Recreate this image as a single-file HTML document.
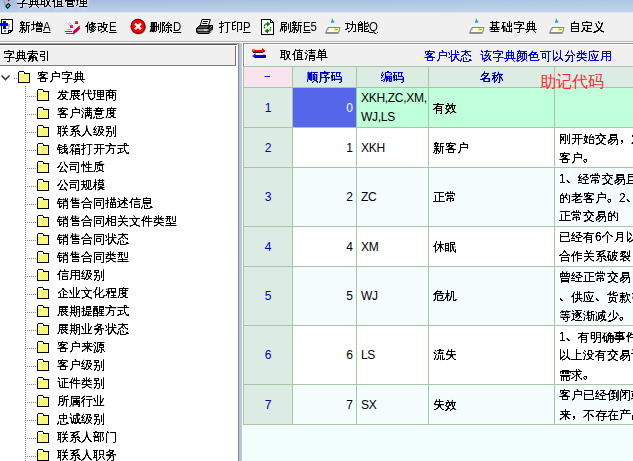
<!DOCTYPE html>
<html lang="zh-CN">
<head>
<meta charset="utf-8">
<title>字典取值管理</title>
<style>
html,body{margin:0;padding:0;}
body{width:633px;height:461px;overflow:hidden;position:relative;background:#f0f0f0;
 font-family:"Liberation Sans","WenQuanYi Zen Hei Sharp","WenQuanYi Zen Hei","Noto Sans CJK SC",sans-serif;font-size:12px;color:#000;}
.abs{position:absolute;}
svg{position:absolute;overflow:visible;}
#title{left:0;top:0;width:633px;height:12px;border-bottom:1px solid #dbe4ef;background:linear-gradient(rgba(255,255,255,0),rgba(255,255,255,0.28)),linear-gradient(90deg,#a4bbdf,#a8bfe0 30%,#a9c4e2 70%,#abc6e3);overflow:hidden;}
#title .t{position:absolute;left:16px;top:-5px;font-size:12px;line-height:14px;white-space:nowrap;color:#000;}
#title .g{color:transparent;text-shadow:0 0 3px #fff,0 0 3px #fff,0 0 4px #fff;}
.tb{position:absolute;top:20px;height:14px;line-height:14px;white-space:nowrap;font-size:12px;}
.tb u{text-decoration:underline;}
.tb .l{display:inline-block;transform:scaleX(0.95);transform-origin:0 0;}
#sep1{left:0;top:41px;width:633px;height:1px;background:#b4b4b4;}
#sep2{left:0;top:42px;width:633px;height:1px;background:#ffffff;}
#lwrap{left:0;top:43px;width:238px;height:418px;background:#fff;}
#lt1{left:0;top:43px;width:238px;height:1px;background:#a0a0a0;}
#lt2{left:0;top:44px;width:237px;height:1px;background:#555;}
#lhead{left:0;top:46px;width:235px;height:19px;background:#f0f0f0;border-right:1px solid #707070;border-bottom:1px solid #808080;box-shadow:0 1px 0 #ececec;}
#lhead span{position:absolute;left:3px;top:3px;line-height:14px;}
#tree{left:0;top:66px;width:238px;height:395px;background:#fff;overflow:hidden;}
.lbl{position:absolute;line-height:14px;white-space:nowrap;}
.dh{position:absolute;height:1px;background-image:linear-gradient(90deg,#808080 50%,transparent 50%);background-size:2px 1px;}
.dv{position:absolute;width:1px;background-image:linear-gradient(#808080 50%,transparent 50%);background-size:1px 2px;}
#split0{left:238px;top:43px;width:1px;height:418px;background:#8c8c8c;}
#split{left:239px;top:43px;width:3px;height:418px;background:linear-gradient(90deg,#b0c0d8,#bccbdf);}
#split2{left:242px;top:43px;width:1px;height:418px;background:#fff;}
#rhead{left:243px;top:43px;width:390px;height:23px;background:#f0f0f0;border-left:1px solid #8c8c8c;border-top:1px solid #8c8c8c;box-sizing:border-box;box-shadow:inset 1px 1px 0 #fff;}
#rhead span{position:absolute;line-height:14px;white-space:nowrap;}
#grid{left:243px;top:66px;width:390px;height:395px;background:#f3ffff;overflow:hidden;}
.c{position:absolute;box-sizing:border-box;border-right:1px solid #a4c9a2;border-bottom:1px solid #a4c9a2;overflow:hidden;white-space:nowrap;}
.c span{position:absolute;line-height:14px;white-space:nowrap;}
.k{filter:url(#bw);}
.n{color:#000038;font-style:normal;}
.p{font-style:normal;font-family:"Noto Sans CJK SC",sans-serif;-webkit-text-stroke:0;}
</style>
</head>
<body>
<svg width="0" height="0" style="left:0;top:0"><defs><pattern id="dith" width="2" height="2" patternUnits="userSpaceOnUse"><rect width="2" height="2" fill="#ffff00"/><rect x="0" y="0" width="1" height="1" fill="#fff"/><rect x="1" y="1" width="1" height="1" fill="#fff"/></pattern><filter id="bw" x="0" y="0" width="100%" height="100%" color-interpolation-filters="sRGB"><feComponentTransfer><feFuncA type="linear" slope="3.4" intercept="-0.62"/></feComponentTransfer></filter></defs></svg>
<div id="title" class="abs"><svg style="left:0;top:0" width="14" height="12" viewBox="0 0 14 12"><path d="M4.5 0V4.5H6.5" fill="none" stroke="#9a9a9a" stroke-width="1"/><path d="M7.6 0H9.6L8.6 1.6Z" fill="#400000"/><rect x="8" y="0" width="1" height="1" fill="#c00000"/><path d="M5 5.9L8.3 3L11 5.6L7.5 9Z" fill="#000"/><path d="M6.4 5.9L8.3 4.3L9.6 5.6L7.6 7.5Z" fill="#00d8d8"/></svg><span class="t g">字典取值管理</span><span class="t k">字典取值管理</span></div>
<div id="sep1" class="abs"></div><div id="sep2" class="abs"></div>
<svg style="left:0px;top:19px" width="14" height="16" viewBox="0 0 14 16" shape-rendering="crispEdges"><path d="M1.5 0.5H12.5V11.5L8.5 14.5H1.5Z" fill="#fff" stroke="#000"/><path d="M8.5 14.5V11.5H12.5" fill="none" stroke="#000"/><path d="M8 5h2v3h-1v2h-3v-1h2z" fill="#b0b0b0"/><path d="M0 4h3v-2h3v2h2v3h-2v3h-3v-3h-3z" fill="#0000ff"/><rect x="4" y="11" width="2" height="2" fill="#00e000"/></svg>
<svg style="left:65px;top:20px" width="16" height="15" viewBox="0 0 16 15"><path d="M0.5 3.5L4 0.5L8 5L5 7.5Z" fill="#fff" stroke="#f4f4f4" stroke-width="0.6"/><path d="M2.5 3L6 7M4 2L7 5.5" stroke="#909090" stroke-width="0.8" fill="none"/><path d="M2 9.5H6" stroke="#a8a8a8" stroke-width="1"/><g shape-rendering="crispEdges"><rect x="5" y="5" width="3" height="3" fill="#ff00c0"/><rect x="5" y="5" width="3" height="1" fill="#707858"/><rect x="5" y="7" width="3" height="1" fill="#f00030"/><rect x="10" y="1" width="3" height="3" fill="#ff00c0"/><rect x="10" y="1" width="3" height="1" fill="#707858"/><rect x="10" y="3" width="3" height="1" fill="#f00030"/><rect x="0" y="11" width="7" height="1" fill="#ff0000"/><rect x="1" y="13" width="7" height="1" fill="#c00070"/></g><path d="M8.5 14V11L14.5 6V9Z" fill="#b00060" stroke="#ff1010" stroke-width="0.9"/><path d="M9 12.6L14 8.4M9.4 13.8L14.4 9.6" stroke="#3000d0" stroke-width="0.7" stroke-dasharray="1 1"/></svg>
<svg style="left:130px;top:18px" width="17" height="17" viewBox="0 0 17 17"><circle cx="8.7" cy="9.3" r="7.3" fill="#505050" opacity="0.6"/><circle cx="8" cy="8.4" r="7" fill="#ff0000" stroke="#8c0000" stroke-width="1.2"/><path d="M5 5.4L11 11.4M11 5.4L5 11.4" stroke="#fff" stroke-width="2.2" stroke-linecap="butt"/></svg>
<svg style="left:196px;top:19px" width="18" height="16" viewBox="0 0 18 16"><path d="M4.3 6.5L6 0.5H14.3L12.5 6.5Z" fill="#fff" stroke="#000"/><path d="M7 2.5H11.8M6.4 4.5H11.2" stroke="#000" stroke-width="1"/><path d="M0.5 9.5L3.5 6.5H16.5V10.5L13 14.5H2L0.5 13Z" fill="#000" stroke="#000"/><path d="M3.8 7.2H13L11 8.8H2.2Z" fill="#606060"/><rect x="1.3" y="9.8" width="11.4" height="2.4" fill="#909090"/><rect x="8" y="10.5" width="3.3" height="1" fill="#fff"/><path d="M2.3 13.4H12.6" stroke="#808080" stroke-width="0.9"/><path d="M13.6 9.3L16 7.2M13.8 13.2L16 10.6" stroke="#e0e0e0" stroke-width="0.8"/><path d="M13.6 11.2L16 8.8" stroke="#707070" stroke-width="0.8"/></svg>
<svg style="left:261px;top:19px" width="14" height="16" viewBox="0 0 14 16"><path d="M0.5 0.5H9.5L12.5 3.5V15.5H0.5Z" fill="#fff" stroke="#000" shape-rendering="crispEdges"/><path d="M9.5 0.5V3.5H12.5" fill="none" stroke="#000" shape-rendering="crispEdges"/><path d="M3.5 9.5V7Q3.5 5 5.5 5H6.5" fill="none" stroke="#008000" stroke-width="1.4" stroke-dasharray="1.6 0.5"/><path d="M6 2.6L9.6 5L6 7.4Z" fill="#008000"/><path d="M9.5 8V10Q9.5 12 7.5 12H6.5" fill="none" stroke="#008000" stroke-width="1.4" stroke-dasharray="1.6 0.5"/><path d="M7 9.6L3.4 12L7 14.4Z" fill="#008000"/></svg>
<svg style="left:325px;top:19px" width="16" height="16" viewBox="0 0 16 16"><path d="M7.2 -0.2L8 1.8L9.4 3.2H5.9L7 2Z" fill="#008080" stroke="#00a0a0" stroke-width="0.5"/><rect x="6.6" y="2.6" width="1.6" height="1.2" fill="#00e0e0"/><path d="M3 8.5H15L13.5 13.6H0.6Z" fill="#fff" stroke="#808080" stroke-width="1"/><path d="M0.4 14.4H13.6" stroke="#8c8c8c" stroke-width="1"/><path d="M8.5 12L10 9.8H13V12Z" fill="#ffff00"/><path d="M9.8 9.4L10.8 10.6L12.5 10.2" stroke="#606000" stroke-width="0.7" fill="none"/><path d="M3.4 9.2L2.8 11.8" stroke="#a0a0a0" stroke-width="0.8"/><path d="M14.6 8.4L14 10.5" stroke="#a0a0a0" stroke-width="0.8"/></svg>
<svg style="left:469px;top:19px" width="16" height="16" viewBox="0 0 16 16"><path d="M7.2 -0.2L8 1.8L9.4 3.2H5.9L7 2Z" fill="#008080" stroke="#00a0a0" stroke-width="0.5"/><rect x="6.6" y="2.6" width="1.6" height="1.2" fill="#00e0e0"/><path d="M3 8.5H15L13.5 13.6H0.6Z" fill="#fff" stroke="#808080" stroke-width="1"/><path d="M0.4 14.4H13.6" stroke="#8c8c8c" stroke-width="1"/><path d="M8.5 12L10 9.8H13V12Z" fill="#ffff00"/><path d="M9.8 9.4L10.8 10.6L12.5 10.2" stroke="#606000" stroke-width="0.7" fill="none"/><path d="M3.4 9.2L2.8 11.8" stroke="#a0a0a0" stroke-width="0.8"/><path d="M14.6 8.4L14 10.5" stroke="#a0a0a0" stroke-width="0.8"/></svg>
<svg style="left:549px;top:19px" width="16" height="16" viewBox="0 0 16 16"><path d="M7.2 -0.2L8 1.8L9.4 3.2H5.9L7 2Z" fill="#008080" stroke="#00a0a0" stroke-width="0.5"/><rect x="6.6" y="2.6" width="1.6" height="1.2" fill="#00e0e0"/><path d="M3 8.5H15L13.5 13.6H0.6Z" fill="#fff" stroke="#808080" stroke-width="1"/><path d="M0.4 14.4H13.6" stroke="#8c8c8c" stroke-width="1"/><path d="M8.5 12L10 9.8H13V12Z" fill="#ffff00"/><path d="M9.8 9.4L10.8 10.6L12.5 10.2" stroke="#606000" stroke-width="0.7" fill="none"/><path d="M3.4 9.2L2.8 11.8" stroke="#a0a0a0" stroke-width="0.8"/><path d="M14.6 8.4L14 10.5" stroke="#a0a0a0" stroke-width="0.8"/></svg>
<div class="tb" style="left:19px"><span class="k">新增</span><span class="l"><u>A</u></span></div>
<div class="tb" style="left:85px"><span class="k">修改</span><span class="l"><u>E</u></span></div>
<div class="tb" style="left:149px"><span class="k">删除</span><span class="l"><u>D</u></span></div>
<div class="tb" style="left:219px"><span class="k">打印</span><span class="l"><u>P</u></span></div>
<div class="tb" style="left:279px"><span class="k">刷新</span><span class="l"><u>E</u>5</span></div>
<div class="tb" style="left:345px"><span class="k">功能</span><span class="l"><u>Q</u></span></div>
<div class="tb k" style="left:489px">基础字典</div>
<div class="tb k" style="left:569px">自定义</div>
<div id="lwrap" class="abs"></div><div id="lt1" class="abs"></div><div id="lt2" class="abs"></div>
<div id="lhead" class="abs"><span class="k">字典索引</span></div>
<div id="tree" class="abs">
<svg style="left:0px;top:8px" width="11" height="8" viewBox="0 0 11 8"><path d="M1.5 1.5L5.5 5.5L9.5 1.5" fill="none" stroke="#404040" stroke-width="1.6"/></svg>
<svg style="left:18px;top:5px" width="12" height="12" viewBox="0 0 12 12" shape-rendering="crispEdges"><rect x="1" y="1" width="5" height="2" fill="#fff"/><rect x="1" y="3" width="10" height="8" fill="url(#dith)"/><path d="M1 0.5H6M0.5 1V12M6.5 1V3M6 2.5H12M11.5 3V12M0 11.5H12" fill="none" stroke="#000" stroke-width="1"/></svg>
<span class="lbl k" style="left:37px;top:4px">客户字典</span>
<div class="dh" style="left:14px;top:12px;width:3px"></div>
<div class="dv" style="left:25px;top:20px;height:400px"></div>
<div class="dh" style="left:27px;top:30px;width:9px"></div>
<svg style="left:37px;top:23px" width="12" height="12" viewBox="0 0 12 12" shape-rendering="crispEdges"><rect x="1" y="1" width="5" height="2" fill="#fff"/><rect x="1" y="3" width="10" height="8" fill="url(#dith)"/><path d="M1 0.5H6M0.5 1V12M6.5 1V3M6 2.5H12M11.5 3V12M0 11.5H12" fill="none" stroke="#000" stroke-width="1"/></svg>
<span class="lbl k" style="left:57px;top:22px">发展代理商</span>
<div class="dh" style="left:27px;top:48px;width:9px"></div>
<svg style="left:37px;top:41px" width="12" height="12" viewBox="0 0 12 12" shape-rendering="crispEdges"><rect x="1" y="1" width="5" height="2" fill="#fff"/><rect x="1" y="3" width="10" height="8" fill="url(#dith)"/><path d="M1 0.5H6M0.5 1V12M6.5 1V3M6 2.5H12M11.5 3V12M0 11.5H12" fill="none" stroke="#000" stroke-width="1"/></svg>
<span class="lbl k" style="left:57px;top:40px">客户满意度</span>
<div class="dh" style="left:27px;top:66px;width:9px"></div>
<svg style="left:37px;top:59px" width="12" height="12" viewBox="0 0 12 12" shape-rendering="crispEdges"><rect x="1" y="1" width="5" height="2" fill="#fff"/><rect x="1" y="3" width="10" height="8" fill="url(#dith)"/><path d="M1 0.5H6M0.5 1V12M6.5 1V3M6 2.5H12M11.5 3V12M0 11.5H12" fill="none" stroke="#000" stroke-width="1"/></svg>
<span class="lbl k" style="left:57px;top:58px">联系人级别</span>
<div class="dh" style="left:27px;top:84px;width:9px"></div>
<svg style="left:37px;top:77px" width="12" height="12" viewBox="0 0 12 12" shape-rendering="crispEdges"><rect x="1" y="1" width="5" height="2" fill="#fff"/><rect x="1" y="3" width="10" height="8" fill="url(#dith)"/><path d="M1 0.5H6M0.5 1V12M6.5 1V3M6 2.5H12M11.5 3V12M0 11.5H12" fill="none" stroke="#000" stroke-width="1"/></svg>
<span class="lbl k" style="left:57px;top:76px">钱箱打开方式</span>
<div class="dh" style="left:27px;top:102px;width:9px"></div>
<svg style="left:37px;top:95px" width="12" height="12" viewBox="0 0 12 12" shape-rendering="crispEdges"><rect x="1" y="1" width="5" height="2" fill="#fff"/><rect x="1" y="3" width="10" height="8" fill="url(#dith)"/><path d="M1 0.5H6M0.5 1V12M6.5 1V3M6 2.5H12M11.5 3V12M0 11.5H12" fill="none" stroke="#000" stroke-width="1"/></svg>
<span class="lbl k" style="left:57px;top:94px">公司性质</span>
<div class="dh" style="left:27px;top:120px;width:9px"></div>
<svg style="left:37px;top:113px" width="12" height="12" viewBox="0 0 12 12" shape-rendering="crispEdges"><rect x="1" y="1" width="5" height="2" fill="#fff"/><rect x="1" y="3" width="10" height="8" fill="url(#dith)"/><path d="M1 0.5H6M0.5 1V12M6.5 1V3M6 2.5H12M11.5 3V12M0 11.5H12" fill="none" stroke="#000" stroke-width="1"/></svg>
<span class="lbl k" style="left:57px;top:112px">公司规模</span>
<div class="dh" style="left:27px;top:138px;width:9px"></div>
<svg style="left:37px;top:131px" width="12" height="12" viewBox="0 0 12 12" shape-rendering="crispEdges"><rect x="1" y="1" width="5" height="2" fill="#fff"/><rect x="1" y="3" width="10" height="8" fill="url(#dith)"/><path d="M1 0.5H6M0.5 1V12M6.5 1V3M6 2.5H12M11.5 3V12M0 11.5H12" fill="none" stroke="#000" stroke-width="1"/></svg>
<span class="lbl k" style="left:57px;top:130px">销售合同描述信息</span>
<div class="dh" style="left:27px;top:156px;width:9px"></div>
<svg style="left:37px;top:149px" width="12" height="12" viewBox="0 0 12 12" shape-rendering="crispEdges"><rect x="1" y="1" width="5" height="2" fill="#fff"/><rect x="1" y="3" width="10" height="8" fill="url(#dith)"/><path d="M1 0.5H6M0.5 1V12M6.5 1V3M6 2.5H12M11.5 3V12M0 11.5H12" fill="none" stroke="#000" stroke-width="1"/></svg>
<span class="lbl k" style="left:57px;top:148px">销售合同相关文件类型</span>
<div class="dh" style="left:27px;top:174px;width:9px"></div>
<svg style="left:37px;top:167px" width="12" height="12" viewBox="0 0 12 12" shape-rendering="crispEdges"><rect x="1" y="1" width="5" height="2" fill="#fff"/><rect x="1" y="3" width="10" height="8" fill="url(#dith)"/><path d="M1 0.5H6M0.5 1V12M6.5 1V3M6 2.5H12M11.5 3V12M0 11.5H12" fill="none" stroke="#000" stroke-width="1"/></svg>
<span class="lbl k" style="left:57px;top:166px">销售合同状态</span>
<div class="dh" style="left:27px;top:192px;width:9px"></div>
<svg style="left:37px;top:185px" width="12" height="12" viewBox="0 0 12 12" shape-rendering="crispEdges"><rect x="1" y="1" width="5" height="2" fill="#fff"/><rect x="1" y="3" width="10" height="8" fill="url(#dith)"/><path d="M1 0.5H6M0.5 1V12M6.5 1V3M6 2.5H12M11.5 3V12M0 11.5H12" fill="none" stroke="#000" stroke-width="1"/></svg>
<span class="lbl k" style="left:57px;top:184px">销售合同类型</span>
<div class="dh" style="left:27px;top:210px;width:9px"></div>
<svg style="left:37px;top:203px" width="12" height="12" viewBox="0 0 12 12" shape-rendering="crispEdges"><rect x="1" y="1" width="5" height="2" fill="#fff"/><rect x="1" y="3" width="10" height="8" fill="url(#dith)"/><path d="M1 0.5H6M0.5 1V12M6.5 1V3M6 2.5H12M11.5 3V12M0 11.5H12" fill="none" stroke="#000" stroke-width="1"/></svg>
<span class="lbl k" style="left:57px;top:202px">信用级别</span>
<div class="dh" style="left:27px;top:228px;width:9px"></div>
<svg style="left:37px;top:221px" width="12" height="12" viewBox="0 0 12 12" shape-rendering="crispEdges"><rect x="1" y="1" width="5" height="2" fill="#fff"/><rect x="1" y="3" width="10" height="8" fill="url(#dith)"/><path d="M1 0.5H6M0.5 1V12M6.5 1V3M6 2.5H12M11.5 3V12M0 11.5H12" fill="none" stroke="#000" stroke-width="1"/></svg>
<span class="lbl k" style="left:57px;top:220px">企业文化程度</span>
<div class="dh" style="left:27px;top:246px;width:9px"></div>
<svg style="left:37px;top:239px" width="12" height="12" viewBox="0 0 12 12" shape-rendering="crispEdges"><rect x="1" y="1" width="5" height="2" fill="#fff"/><rect x="1" y="3" width="10" height="8" fill="url(#dith)"/><path d="M1 0.5H6M0.5 1V12M6.5 1V3M6 2.5H12M11.5 3V12M0 11.5H12" fill="none" stroke="#000" stroke-width="1"/></svg>
<span class="lbl k" style="left:57px;top:238px">展期提醒方式</span>
<div class="dh" style="left:27px;top:264px;width:9px"></div>
<svg style="left:37px;top:257px" width="12" height="12" viewBox="0 0 12 12" shape-rendering="crispEdges"><rect x="1" y="1" width="5" height="2" fill="#fff"/><rect x="1" y="3" width="10" height="8" fill="url(#dith)"/><path d="M1 0.5H6M0.5 1V12M6.5 1V3M6 2.5H12M11.5 3V12M0 11.5H12" fill="none" stroke="#000" stroke-width="1"/></svg>
<span class="lbl k" style="left:57px;top:256px">展期业务状态</span>
<div class="dh" style="left:27px;top:282px;width:9px"></div>
<svg style="left:37px;top:275px" width="12" height="12" viewBox="0 0 12 12" shape-rendering="crispEdges"><rect x="1" y="1" width="5" height="2" fill="#fff"/><rect x="1" y="3" width="10" height="8" fill="url(#dith)"/><path d="M1 0.5H6M0.5 1V12M6.5 1V3M6 2.5H12M11.5 3V12M0 11.5H12" fill="none" stroke="#000" stroke-width="1"/></svg>
<span class="lbl k" style="left:57px;top:274px">客户来源</span>
<div class="dh" style="left:27px;top:300px;width:9px"></div>
<svg style="left:37px;top:293px" width="12" height="12" viewBox="0 0 12 12" shape-rendering="crispEdges"><rect x="1" y="1" width="5" height="2" fill="#fff"/><rect x="1" y="3" width="10" height="8" fill="url(#dith)"/><path d="M1 0.5H6M0.5 1V12M6.5 1V3M6 2.5H12M11.5 3V12M0 11.5H12" fill="none" stroke="#000" stroke-width="1"/></svg>
<span class="lbl k" style="left:57px;top:292px">客户级别</span>
<div class="dh" style="left:27px;top:318px;width:9px"></div>
<svg style="left:37px;top:311px" width="12" height="12" viewBox="0 0 12 12" shape-rendering="crispEdges"><rect x="1" y="1" width="5" height="2" fill="#fff"/><rect x="1" y="3" width="10" height="8" fill="url(#dith)"/><path d="M1 0.5H6M0.5 1V12M6.5 1V3M6 2.5H12M11.5 3V12M0 11.5H12" fill="none" stroke="#000" stroke-width="1"/></svg>
<span class="lbl k" style="left:57px;top:310px">证件类别</span>
<div class="dh" style="left:27px;top:336px;width:9px"></div>
<svg style="left:37px;top:329px" width="12" height="12" viewBox="0 0 12 12" shape-rendering="crispEdges"><rect x="1" y="1" width="5" height="2" fill="#fff"/><rect x="1" y="3" width="10" height="8" fill="url(#dith)"/><path d="M1 0.5H6M0.5 1V12M6.5 1V3M6 2.5H12M11.5 3V12M0 11.5H12" fill="none" stroke="#000" stroke-width="1"/></svg>
<span class="lbl k" style="left:57px;top:328px">所属行业</span>
<div class="dh" style="left:27px;top:354px;width:9px"></div>
<svg style="left:37px;top:347px" width="12" height="12" viewBox="0 0 12 12" shape-rendering="crispEdges"><rect x="1" y="1" width="5" height="2" fill="#fff"/><rect x="1" y="3" width="10" height="8" fill="url(#dith)"/><path d="M1 0.5H6M0.5 1V12M6.5 1V3M6 2.5H12M11.5 3V12M0 11.5H12" fill="none" stroke="#000" stroke-width="1"/></svg>
<span class="lbl k" style="left:57px;top:346px">忠诚级别</span>
<div class="dh" style="left:27px;top:372px;width:9px"></div>
<svg style="left:37px;top:365px" width="12" height="12" viewBox="0 0 12 12" shape-rendering="crispEdges"><rect x="1" y="1" width="5" height="2" fill="#fff"/><rect x="1" y="3" width="10" height="8" fill="url(#dith)"/><path d="M1 0.5H6M0.5 1V12M6.5 1V3M6 2.5H12M11.5 3V12M0 11.5H12" fill="none" stroke="#000" stroke-width="1"/></svg>
<span class="lbl k" style="left:57px;top:364px">联系人部门</span>
<div class="dh" style="left:27px;top:390px;width:9px"></div>
<svg style="left:37px;top:383px" width="12" height="12" viewBox="0 0 12 12" shape-rendering="crispEdges"><rect x="1" y="1" width="5" height="2" fill="#fff"/><rect x="1" y="3" width="10" height="8" fill="url(#dith)"/><path d="M1 0.5H6M0.5 1V12M6.5 1V3M6 2.5H12M11.5 3V12M0 11.5H12" fill="none" stroke="#000" stroke-width="1"/></svg>
<span class="lbl k" style="left:57px;top:382px">联系人职务</span>
</div>
<div id="split0" class="abs"></div><div id="split" class="abs"></div><div id="split2" class="abs"></div>
<div id="rhead" class="abs"><svg style="left:8px;top:4px" width="14" height="11" viewBox="0 0 14 11"><path d="M1 4H11V5H1Z" fill="#000"/><path d="M0.5 2H11V4H0.5Z" fill="#ff0000"/><path d="M10 0L13.5 3L10 5.6Z" fill="#e00000"/><circle cx="1.6" cy="2.6" r="1.5" fill="#ff0000"/><rect x="1" y="1.4" width="1" height="1" fill="#ffe000"/><path d="M3 4.9H10V7H3Z" fill="#fff"/><path d="M3 9H12V10H3Z" fill="#000"/><path d="M2 7H12V9H2Z" fill="#0000e0"/><path d="M3.6 5.2L0 8L3.6 10.6Z" fill="#0000e0"/><circle cx="12" cy="8.2" r="1.7" fill="#0000c0"/><rect x="1.4" y="7.4" width="1" height="1" fill="#00e0ff"/><path d="M13.3 7V10" stroke="#000" stroke-width="0.9"/></svg><span class="k" style="left:36px;top:4px">取值清单</span><span class="k" style="left:180px;top:5px;color:#0000ff">客户状态</span><span class="k" style="left:236px;top:5px;color:#0000ff">该字典颜色可以分类应用</span></div>
<div id="grid" class="abs">
<div class="abs" style="left:0;top:0;width:390px;height:1px;background:#a4c9a2"></div>
<div class="abs" style="left:0;top:0;width:1px;height:359px;background:#a4c9a2"></div>
<div class="c" style="left:1px;top:1px;width:49px;height:21px;background:#f7e4ef"><span class="k" style="left:-1px;width:48px;text-align:center;top:2px;color:#0000c8">－</span></div>
<div class="c" style="left:50px;top:1px;width:64px;height:21px;background:#dcebe4"><span class="k" style="left:0;width:63px;text-align:center;top:3px;color:#0000c8">顺序码</span></div>
<div class="c" style="left:114px;top:1px;width:72px;height:21px;background:#dcebe4"><span class="k" style="left:0;width:71px;text-align:center;top:3px;color:#0000c8">编码</span></div>
<div class="c" style="left:186px;top:1px;width:126px;height:21px;background:#dcebe4"><span class="k" style="left:0;width:125px;text-align:center;top:3px;color:#0000c8">名称</span></div>
<div class="c" style="left:312px;top:1px;width:146px;height:21px;background:#dcebe4"><span class="k" style="left:0;width:145px;text-align:center;top:3px;color:#0000c8"></span></div>
<div class="c" style="left:1px;top:22px;width:49px;height:40px;background:#dcebe4"><span style="left:0;width:48px;text-align:center;top:13px;color:#0000c8">1</span></div>
<div class="c" style="left:50px;top:22px;width:64px;height:40px;background:#5566ea"><span style="right:3px;top:13px;color:#fff">0</span></div>
<div class="c" style="left:114px;top:22px;width:72px;height:40px;background:#bfffd9"><span style="left:4px;top:3px;letter-spacing:-0.3px;">XKH,ZC,XM,</span><span style="left:4px;top:22px;letter-spacing:-0.3px;">WJ,LS</span></div>
<div class="c" style="left:186px;top:22px;width:126px;height:40px;background:#bfffd9"><span class="k" style="left:4px;top:13px">有效</span></div>
<div class="c" style="left:312px;top:22px;width:146px;height:40px;background:#bfffd9"></div>
<div class="c" style="left:1px;top:62px;width:49px;height:40px;background:#dcebe4"><span style="left:0;width:48px;text-align:center;top:13px;color:#0000c8">2</span></div>
<div class="c" style="left:50px;top:62px;width:64px;height:40px;background:#ffffff"><span style="right:3px;top:13px">1</span></div>
<div class="c" style="left:114px;top:62px;width:72px;height:40px;background:#ffffff"><span style="left:4px;top:13px;letter-spacing:-0.3px;">XKH</span></div>
<div class="c" style="left:186px;top:62px;width:126px;height:40px;background:#ffffff"><span class="k" style="left:4px;top:13px">新客户</span></div>
<div class="c" style="left:312px;top:62px;width:146px;height:40px;background:#ffffff"><span class="k" style="left:4px;top:3px;">刚开始交易<em class="p">，</em>对</span><span class="k" style="left:4px;top:22px;">客户<em class="p">。</em></span></div>
<div class="c" style="left:1px;top:102px;width:49px;height:59px;background:#dcebe4"><span style="left:0;width:48px;text-align:center;top:22px;color:#0000c8">3</span></div>
<div class="c" style="left:50px;top:102px;width:64px;height:59px;background:#f5fdff"><span style="right:3px;top:22px">2</span></div>
<div class="c" style="left:114px;top:102px;width:72px;height:59px;background:#f5fdff"><span style="left:4px;top:22px;letter-spacing:-0.3px;">ZC</span></div>
<div class="c" style="left:186px;top:102px;width:126px;height:59px;background:#f5fdff"><span class="k" style="left:4px;top:22px">正常</span></div>
<div class="c" style="left:312px;top:102px;width:146px;height:59px;background:#f5fdff"><span class="k" style="left:4px;top:3px;"><em class="n">1</em><em class="p">、</em>经常交易且</span><span class="k" style="left:4px;top:22px;">的老客户<em class="p">。</em><em class="n">2</em><em class="p">、</em></span><span class="k" style="left:4px;top:41px;">正常交易的</span></div>
<div class="c" style="left:1px;top:161px;width:49px;height:40px;background:#dcebe4"><span style="left:0;width:48px;text-align:center;top:13px;color:#0000c8">4</span></div>
<div class="c" style="left:50px;top:161px;width:64px;height:40px;background:#ffffff"><span style="right:3px;top:13px">4</span></div>
<div class="c" style="left:114px;top:161px;width:72px;height:40px;background:#ffffff"><span style="left:4px;top:13px;letter-spacing:-0.3px;">XM</span></div>
<div class="c" style="left:186px;top:161px;width:126px;height:40px;background:#ffffff"><span class="k" style="left:4px;top:13px">休眠</span></div>
<div class="c" style="left:312px;top:161px;width:146px;height:40px;background:#ffffff"><span class="k" style="left:4px;top:3px;">已经有<em class="n">6</em>个月以</span><span class="k" style="left:4px;top:22px;">合作关系破裂</span></div>
<div class="c" style="left:1px;top:201px;width:49px;height:59px;background:#dcebe4"><span style="left:0;width:48px;text-align:center;top:22px;color:#0000c8">5</span></div>
<div class="c" style="left:50px;top:201px;width:64px;height:59px;background:#f5fdff"><span style="right:3px;top:22px">5</span></div>
<div class="c" style="left:114px;top:201px;width:72px;height:59px;background:#f5fdff"><span style="left:4px;top:22px;letter-spacing:-0.3px;">WJ</span></div>
<div class="c" style="left:186px;top:201px;width:126px;height:59px;background:#f5fdff"><span class="k" style="left:4px;top:22px">危机</span></div>
<div class="c" style="left:312px;top:201px;width:146px;height:59px;background:#f5fdff"><span class="k" style="left:4px;top:3px;">曾经正常交易</span><span class="k" style="left:4px;top:22px;"><em class="p">、</em>供应<em class="p">、</em>货款等</span><span class="k" style="left:4px;top:41px;">等逐渐减少<em class="p">。</em></span></div>
<div class="c" style="left:1px;top:260px;width:49px;height:59px;background:#dcebe4"><span style="left:0;width:48px;text-align:center;top:22px;color:#0000c8">6</span></div>
<div class="c" style="left:50px;top:260px;width:64px;height:59px;background:#ffffff"><span style="right:3px;top:22px">6</span></div>
<div class="c" style="left:114px;top:260px;width:72px;height:59px;background:#ffffff"><span style="left:4px;top:22px;letter-spacing:-0.3px;">LS</span></div>
<div class="c" style="left:186px;top:260px;width:126px;height:59px;background:#ffffff"><span class="k" style="left:4px;top:22px">流失</span></div>
<div class="c" style="left:312px;top:260px;width:146px;height:59px;background:#ffffff"><span class="k" style="left:4px;top:3px;"><em class="n">1</em><em class="p">、</em>有明确事件</span><span class="k" style="left:4px;top:22px;">以上没有交易记</span><span class="k" style="left:4px;top:41px;">需求<em class="p">。</em></span></div>
<div class="c" style="left:1px;top:319px;width:49px;height:40px;background:#dcebe4"><span style="left:0;width:48px;text-align:center;top:13px;color:#0000c8">7</span></div>
<div class="c" style="left:50px;top:319px;width:64px;height:40px;background:#f5fdff"><span style="right:3px;top:13px">7</span></div>
<div class="c" style="left:114px;top:319px;width:72px;height:40px;background:#f5fdff"><span style="left:4px;top:13px;letter-spacing:-0.3px;">SX</span></div>
<div class="c" style="left:186px;top:319px;width:126px;height:40px;background:#f5fdff"><span class="k" style="left:4px;top:13px">失效</span></div>
<div class="c" style="left:312px;top:319px;width:146px;height:40px;background:#f5fdff"><span class="k" style="left:4px;top:3px;">客户已经倒闭或</span><span class="k" style="left:4px;top:22px;">来<em class="p">，</em>不存在产品</span></div>
<span class="abs" style="left:297px;top:7px;font-size:16px;line-height:18px;color:#ff2a2a;white-space:nowrap;-webkit-text-stroke:0">助记代码</span>
</div>
</body>
</html>
